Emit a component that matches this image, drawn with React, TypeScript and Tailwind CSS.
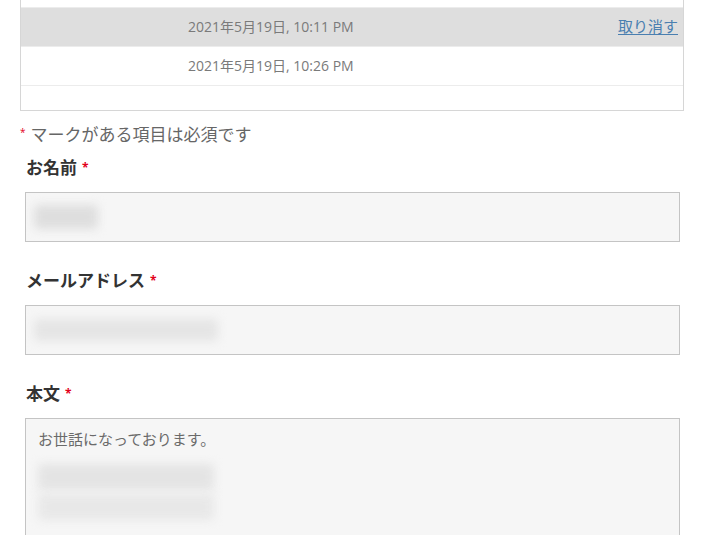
import React from 'react';

const font = { fontFamily: '"Open Sans", "Noto Sans CJK JP", sans-serif' };

interface Revision {
  date: string;
  action?: string;
  active?: boolean;
}

const revisions: Revision[] = [
  { date: '2021年5月19日, 10:11 PM', action: '取り消す', active: true },
  { date: '2021年5月19日, 10:26 PM' },
];

function Required() {
  return <span className="ml-[5px] text-[12px] font-bold text-[#e2001a] align-top">*</span>;
}

function Field({ label, children }: { label: string; children: React.ReactNode }) {
  return (
    <div className="flex flex-col">
      <label className="flex items-start pl-[1px] text-[17px] font-bold leading-[26px] text-[#333]">
        {label}
        <Required />
      </label>
      {children}
    </div>
  );
}

export default function App() {
  return (
    <div className="min-h-screen bg-white px-5" style={font}>
      {/* Revision table */}
      <div className="border-x border-b border-[#d6d6d6]">
        <div className="h-2 border-b border-[#ececec]" />
        {revisions.map((r) => (
          <div
            key={r.date}
            className={`flex h-[39px] items-center justify-between border-b border-[#ececec] pl-[167px] pr-[5px] text-[14px] text-[#7a7a7a] ${
              r.active ? 'bg-[#dedede]' : 'bg-white'
            }`}
          >
            <span className="-mt-[2px]">{r.date}</span>
            {r.action && (
              <a href="#" className="-mt-[2px] text-[15px] text-[#4a7fb0] underline underline-offset-2">
                {r.action}
              </a>
            )}
          </div>
        ))}
        <div className="h-6" />
      </div>

      {/* Comment form */}
      <p className="mt-[11px] flex items-start text-[17px] leading-[26px] text-[#666]">
        <span className="mr-[5px] mt-[2px] text-[10px] leading-[16px] text-[#e2001a]">*</span>
        マークがある項目は必須です
      </p>

      <div className="mt-[7px] flex flex-col gap-[26px] pl-[5px] pr-1">
        <Field label="お名前">
          <div className="mt-[11px] flex h-[50px] items-center border border-[#c4c4c4] bg-[#f6f6f6] px-2">
            <div className="h-[24px] w-[64px] rounded bg-[#dedede] blur-[5px]" />
          </div>
        </Field>

        <Field label="メールアドレス">
          <div className="mt-[11px] flex h-[50px] items-center border border-[#c4c4c4] bg-[#f6f6f6] px-2">
            <div className="h-[22px] w-[184px] rounded bg-[#e5e5e5] blur-[5px]" />
          </div>
        </Field>

        <Field label="本文">
          <div className="mt-[11px] flex h-[140px] flex-col border border-[#c4c4c4] bg-[#f6f6f6] px-3 pt-[9px]">
            <span className="text-[15px] leading-[22px] text-[#6a6a6a]">お世話になっております。</span>
            <div className="mt-[14px] flex flex-col gap-1">
              <div className="h-[26px] w-[176px] rounded bg-[#e4e4e4] blur-[5px]" />
              <div className="h-[26px] w-[176px] rounded bg-[#e8e8e8] blur-[5px]" />
            </div>
          </div>
        </Field>
      </div>
    </div>
  );
}
